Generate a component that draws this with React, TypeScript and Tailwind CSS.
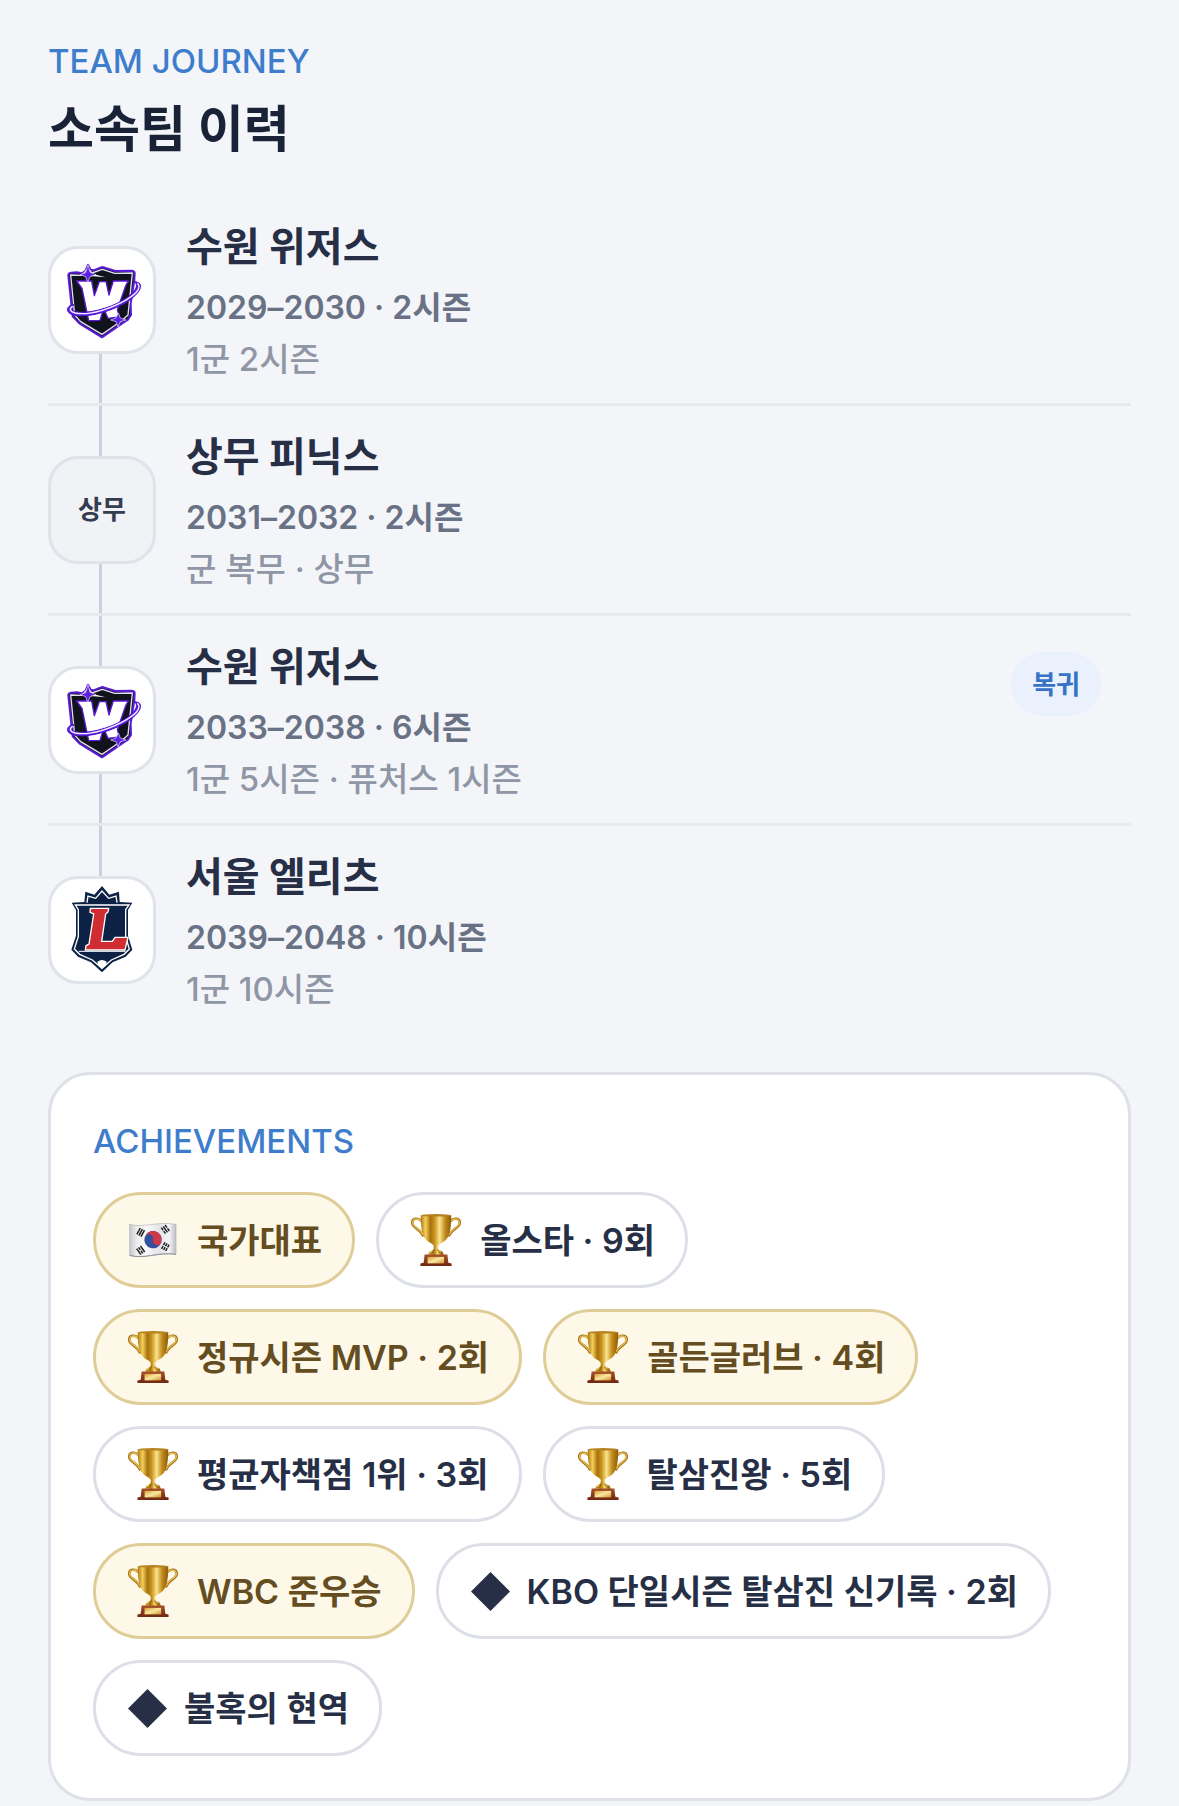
import React from "react";

function WizardsLogo() {
  return (
    <svg viewBox="-27 -18 306 306" className="h-full w-full" role="img" aria-label="수원 위저스">
      <path
        d="M25 62 Q24 54 33 53 L50 52 L66 55 L77 47 L84 29 L92 44 L100 46 L127 36 L166 48 L216 47 Q225 48 224 57 L223 76 L212 146 L213 180 L203 195 L190 203 L126 247 L58 205 L38 184 Z"
        fill="#15151f"
        stroke="#5a1bd6"
        strokeWidth="6"
        strokeLinejoin="round"
      />
      <path
        d="M32 60 L66 61 L84 40 L96 54 L127 43 L164 55 L217 54 L204 180 L184 198 L126 238 L62 200 L44 180 Z"
        fill="#10131c"
        stroke="#e2dcf6"
        strokeWidth="4"
        strokeLinejoin="round"
      />
      <path
        d="M50 78 L95 78 L103 122 L118 80 L138 80 L147 120 L160 78 L205 78 L197 92 L172 164 L178 186 L144 190 L131 160 L120 196 L86 197 L66 100 Z"
        fill="#fff"
        stroke="#5a1bd6"
        strokeWidth="4"
        strokeLinejoin="round"
      />
      <path
        d="M38 148 C18 155 18 171 34 178 C66 191 138 176 194 145 C234 121 252 94 236 83 L222 79 C238 91 228 110 192 134 C146 162 78 178 46 170 C32 166 32 157 42 150 Z"
        fill="#5f20e6"
        stroke="#4a12c9"
        strokeWidth="3"
      />
      <path d="M38 154 C27 161 29 170 46 174 C90 183 158 159 201 133 C237 111 243 95 232 85" fill="none" stroke="#f3effd" strokeWidth="4" />
      <path d="M84 29 L90 52 L108 59 L90 65 L83 82 L77 65 L61 59 L77 53 Z" fill="#5f20e6" stroke="#e2dcf6" strokeWidth="2" />
      <path d="M92 63 L136 67 L108 59 Z" fill="#fff" />
      <path d="M175 174 L181 189 L198 195 L181 200 L174 216 L168 200 L152 195 L168 189 Z" fill="#5f20e6" stroke="#e2dcf6" strokeWidth="2" />
    </svg>
  );
}

function ElitesLogo() {
  return (
    <svg viewBox="-27 12 306 306" className="h-full w-full" role="img" aria-label="서울 엘리츠">
      <path
        d="M126 33 L148 59 L177 50 L179 81 L217 83 L204 105 L204 182 L217 224 L197 245 L158 262 L126 292 L93 262 L54 245 L34 224 L48 182 L48 105 L35 83 L73 81 L76 50 L103 59 Z"
        fill="#0c2144"
      />
      <path d="M81 83 L84 63 L107 70 L126 48 L146 70 L168 63 L171 83" fill="none" stroke="#fff" strokeWidth="4" />
      <path
        d="M46 90 L207 90 L197 104 L197 184 L208 222 L192 238 L154 255 L126 280 L97 255 L59 238 L43 222 L55 184 L55 104 Z"
        fill="#0c2144"
        stroke="#fff"
        strokeWidth="4"
      />
      <path d="M97 82 L105 75 L115 79 L126 64 L137 79 L148 75 L156 82 Z" fill="#0c2144" />
      <path
        d="M91 100 L146 100 L144 111 L137 117 L125 199 L157 199 L165 187 L204 187 L195 225 L76 225 L78 212 L87 207 L101 117 L90 112 Z"
        fill="#d02d32"
        stroke="#fff"
        strokeWidth="4"
      />
      <path d="M56 229 L196 229" stroke="#fff" strokeWidth="3" />
      <path d="M112 260 Q126 250 140 260 L138 270 L126 281 L114 270 Z" fill="#fff" />
    </svg>
  );
}

function Trophy() {
  return (
    <svg viewBox="33 40 154 162" className="h-[54px] w-[50px] shrink-0" aria-hidden="true">
      <defs>
        <linearGradient id="cup" x1="0" x2="1">
          <stop offset="0" stopColor="#b07a12" />
          <stop offset="0.16" stopColor="#f3cf5c" />
          <stop offset="0.32" stopColor="#a8710d" />
          <stop offset="0.45" stopColor="#c8931f" />
          <stop offset="0.62" stopColor="#fbe48a" />
          <stop offset="0.8" stopColor="#c08a1c" />
          <stop offset="1" stopColor="#8d5c08" />
        </linearGradient>
        <linearGradient id="base" x1="0" x2="0" y1="0" y2="1">
          <stop offset="0" stopColor="#a5502a" />
          <stop offset="1" stopColor="#6f2710" />
        </linearGradient>
        <linearGradient id="plate" x1="0" x2="1" y1="0" y2="1">
          <stop offset="0" stopColor="#d99f35" />
          <stop offset="0.5" stopColor="#fbe7a0" />
          <stop offset="1" stopColor="#cf9330" />
        </linearGradient>
      </defs>
      <g fill="none" strokeLinecap="round">
        <path d="M67 64 C55 50 35 54 37 70 C39 84 63 88 69 107" stroke="#a87416" strokeWidth="8" />
        <path d="M153 64 C165 50 185 54 183 70 C181 84 157 88 151 107" stroke="#a87416" strokeWidth="8" />
        <path d="M66 63 C55 52 37 55 38 69 C41 83 63 88 69 104" stroke="#e6bd55" strokeWidth="4" />
        <path d="M154 63 C165 52 183 55 182 69 C179 83 157 88 151 104" stroke="#e6bd55" strokeWidth="4" />
      </g>
      <path d="M63 45 C63 87 67 119 91 129 Q105 135 106 150 L114 150 Q115 135 129 129 C153 119 157 87 157 45 Z" fill="url(#cup)" />
      <ellipse cx="110" cy="45" rx="47" ry="4" fill="#b58220" />
      <path d="M104 137 Q110 132 116 137 L118 151 L131 157 L135 170 L85 170 L89 157 L102 151 Z" fill="url(#cup)" />
      <path d="M91 162 Q100 166 105 150 M129 162 Q120 166 115 150" fill="none" stroke="#8f5d0a" strokeWidth="3" />
      <path d="M75 166 L145 166 L148 191 L158 193 L158 201 L62 201 L62 193 L72 191 Z" fill="url(#base)" />
      <rect x="84" y="173" width="51" height="20" fill="url(#plate)" />
    </svg>
  );
}

function Trigram({ x, y, angle, broken }: { x: number; y: number; angle: number; broken: number[] }) {
  return (
    <g transform={`translate(${x} ${y}) rotate(${angle})`} stroke="#222" strokeWidth="4.5">
      {[-7, 0, 7].map((offset, i) => (
        <path
          key={offset}
          d={broken.includes(i) ? `M${offset} -11 V-1.5 M${offset} 1.5 V11` : `M${offset} -11 V11`}
        />
      ))}
    </g>
  );
}

function KoreaFlag() {
  return (
    <svg viewBox="56 46 150 150" className="h-[50px] w-[50px] shrink-0" aria-hidden="true">
      <defs>
        <linearGradient id="cloth" x1="0" x2="1">
          <stop offset="0" stopColor="#c9c9cc" />
          <stop offset="0.15" stopColor="#ececee" />
          <stop offset="0.35" stopColor="#fafafa" />
          <stop offset="0.65" stopColor="#e4e4e8" />
          <stop offset="0.85" stopColor="#f5f5f7" />
          <stop offset="1" stopColor="#bdbdc2" />
        </linearGradient>
      </defs>
      <path
        d="M61 73 C95 87 145 64 200 74 L200 164 C145 156 105 180 61 167 Z"
        fill="url(#cloth)"
        stroke="#b4b4b8"
        strokeWidth="2"
      />
      <path d="M61 167 C105 180 145 156 200 164" fill="none" stroke="#8f8f94" strokeWidth="3" />
      <g transform="rotate(15 131 120)">
        <circle cx="131" cy="120" r="26" fill="#33509c" />
        <path d="M105 120 A26 26 0 0 1 157 120 A13 13 0 0 1 131 120 A13 13 0 0 0 105 120 Z" fill="#cf3846" />
      </g>
      <Trigram x={94} y={98} angle={28} broken={[]} />
      <Trigram x={168} y={89} angle={-35} broken={[0, 2]} />
      <Trigram x={94} y={152} angle={-35} broken={[1]} />
      <Trigram x={168} y={141} angle={28} broken={[0, 1, 2]} />
    </svg>
  );
}

function Diamond() {
  return (
    <svg viewBox="0 0 39 39" className="h-[39px] w-[39px] shrink-0" aria-hidden="true">
      <path d="M19.5 0 L39 19.5 L19.5 39 L0 19.5 Z" fill="#262f45" />
    </svg>
  );
}

type Stint = {
  team: string;
  period: string;
  detail: string;
  logo: "wizards" | "elites" | "text";
  tag?: string;
};

const stints: Stint[] = [
  { team: "수원 위저스", period: "2029–2030 · 2시즌", detail: "1군 2시즌", logo: "wizards" },
  { team: "상무 피닉스", period: "2031–2032 · 2시즌", detail: "군 복무 · 상무", logo: "text" },
  { team: "수원 위저스", period: "2033–2038 · 6시즌", detail: "1군 5시즌 · 퓨처스 1시즌", logo: "wizards", tag: "복귀" },
  { team: "서울 엘리츠", period: "2039–2048 · 10시즌", detail: "1군 10시즌", logo: "elites" },
];

type Achievement = { label: string; icon: "flag" | "trophy" | "diamond"; gold?: boolean };

const achievements: Achievement[] = [
  { label: "국가대표", icon: "flag", gold: true },
  { label: "올스타 · 9회", icon: "trophy" },
  { label: "정규시즌 MVP · 2회", icon: "trophy", gold: true },
  { label: "골든글러브 · 4회", icon: "trophy", gold: true },
  { label: "평균자책점 1위 · 3회", icon: "trophy" },
  { label: "탈삼진왕 · 5회", icon: "trophy" },
  { label: "WBC 준우승", icon: "trophy", gold: true },
  { label: "KBO 단일시즌 탈삼진 신기록 · 2회", icon: "diamond" },
  { label: "불혹의 현역", icon: "diamond" },
];

function StintRow({ stint, first, last }: { stint: Stint; first: boolean; last: boolean }) {
  return (
    <li className={`flex gap-[30px] ${last ? "min-h-[207px]" : "min-h-[210px] border-b-3 border-[#e7e9ef]"}`}>
      <div className="flex w-[108px] shrink-0 flex-col">
        <span className={`ml-[51px] w-[3px] flex-1 ${first ? "" : "bg-[#cbd1dc]"}`} />
        <div
          className={`flex size-[108px] items-center justify-center rounded-[30px] border-3 border-[#dfe3ea] ${
            stint.logo === "text" ? "bg-[#f1f2f6]" : "bg-white"
          }`}
        >
          {stint.logo === "wizards" && <WizardsLogo />}
          {stint.logo === "elites" && <ElitesLogo />}
          {stint.logo === "text" && <span className="text-[26px] font-bold text-[#333c50]">상무</span>}
        </div>
        <span className={`ml-[51px] w-[3px] flex-1 ${last ? "" : "bg-[#cbd1dc]"}`} />
      </div>
      <div className="flex flex-1 flex-col justify-center">
        <h3 className="mb-1 text-[40px] leading-[60px] font-bold text-[#262f45]">{stint.team}</h3>
        <p className="text-[32px] leading-[54px] font-semibold text-[#697185]">{stint.period}</p>
        <p className="text-[33px] leading-[48px] font-medium text-[#8f96a5]">{stint.detail}</p>
      </div>
      {stint.tag && (
        <span className="mt-9 mr-[30px] flex h-16 items-center self-start rounded-full bg-[#eaf1fd] px-[21px] text-[26px] font-bold text-[#3673c6]">
          {stint.tag}
        </span>
      )}
    </li>
  );
}

function AchievementPill({ item }: { item: Achievement }) {
  return (
    <li
      className={`flex h-24 items-center rounded-full border-3 pr-[30px] pl-8 text-[34px] font-semibold whitespace-nowrap ${
        item.icon === "diamond" ? "gap-[17px]" : "gap-[19px]"
      } ${item.gold ? "border-[#dfcd98] bg-[#fef8e8] text-[#644d20]" : "border-[#dcdfe7] bg-white text-[#262f45]"}`}
    >
      {item.icon === "flag" && <KoreaFlag />}
      {item.icon === "trophy" && <Trophy />}
      {item.icon === "diamond" && <Diamond />}
      <span>{item.label}</span>
    </li>
  );
}

export default function App() {
  return (
    <main className="min-h-screen bg-[#f4f5f9] px-12 pt-10 font-['Inter','Noto_Sans_CJK_KR',sans-serif]">
      <section>
        <p className="text-[33px] leading-[42px] font-medium text-[#3e7dcc]">TEAM JOURNEY</p>
        <h2 className="mt-3.5 text-[50px] leading-[66px] font-bold text-[#192237]">소속팀 이력</h2>
        <ol className="mt-[34px]">
          {stints.map((stint, i) => (
            <StintRow key={stint.period} stint={stint} first={i === 0} last={i === stints.length - 1} />
          ))}
        </ol>
      </section>
      <section className="mt-[39px] rounded-[42px] border-3 border-[#dee1e8] bg-white p-[42px]">
        <h2 className="text-[33px] leading-[48px] font-medium text-[#3e7dcc]">ACHIEVEMENTS</h2>
        <ul className="mt-[27px] flex flex-wrap gap-[21px]">
          {achievements.map((item) => (
            <AchievementPill key={item.label} item={item} />
          ))}
        </ul>
      </section>
    </main>
  );
}
